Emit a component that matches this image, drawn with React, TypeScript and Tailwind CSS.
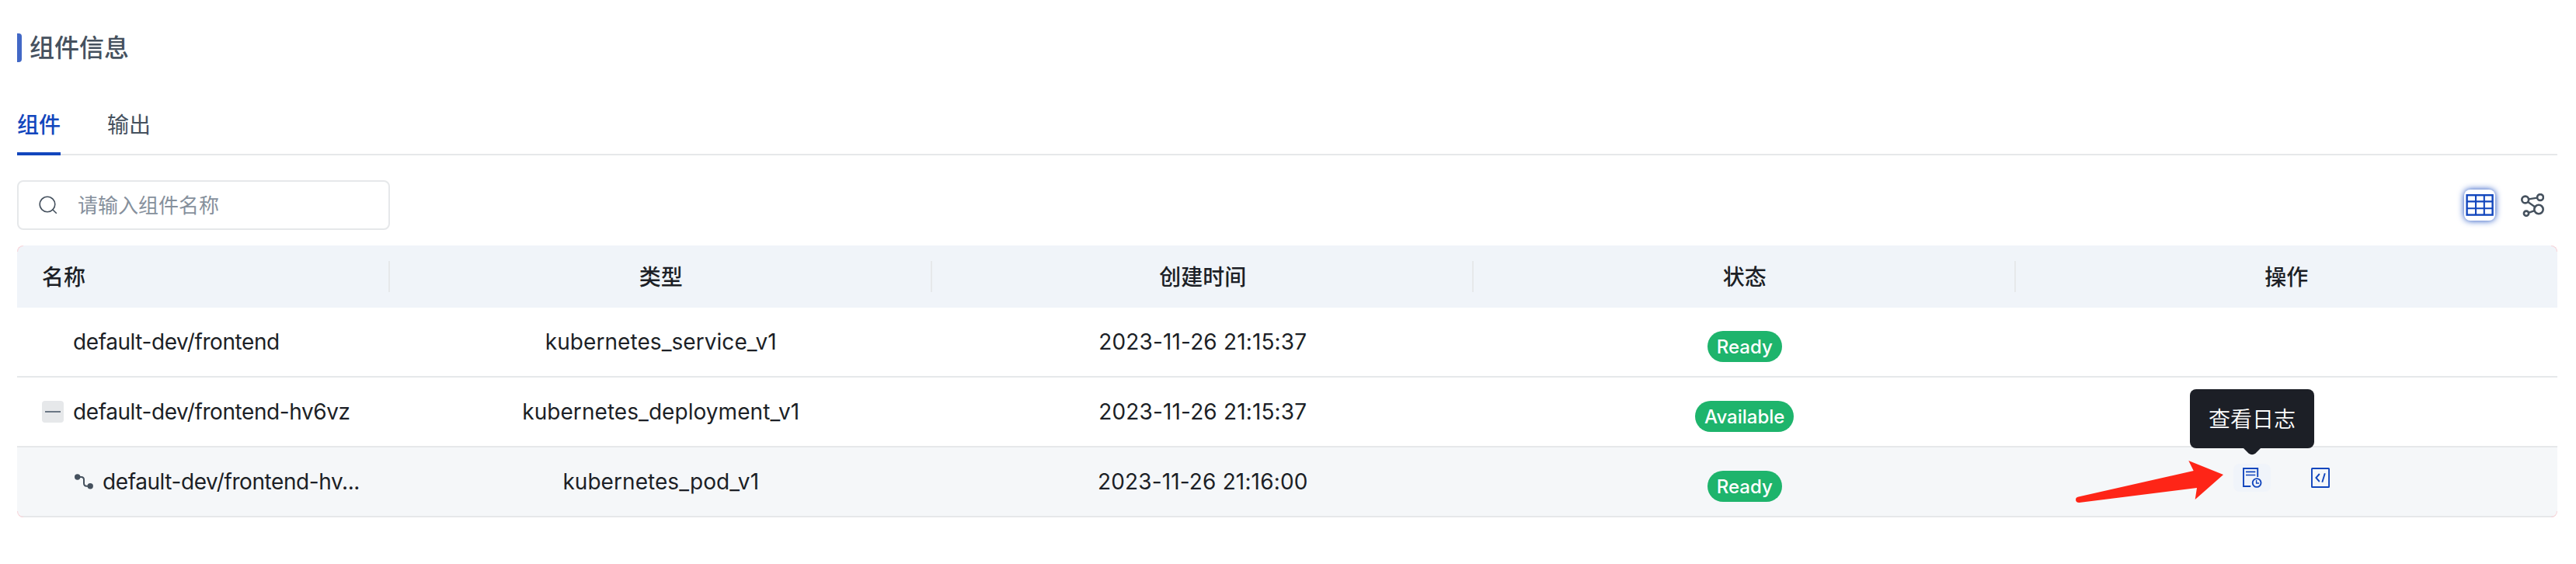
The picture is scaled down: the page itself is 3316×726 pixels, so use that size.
import React from "react";

const rowCols = "grid grid-cols-[480px_repeat(4,minmax(0,1fr))]";

type Row = {
  name: string;
  type: string;
  time: string;
  status: string;
  kind: "plain" | "parent" | "child";
};

const rows: Row[] = [
  { name: "default-dev/frontend", type: "kubernetes_service_v1", time: "2023-11-26 21:15:37", status: "Ready", kind: "plain" },
  { name: "default-dev/frontend-hv6vz", type: "kubernetes_deployment_v1", time: "2023-11-26 21:15:37", status: "Available", kind: "parent" },
  { name: "default-dev/frontend-hv...", type: "kubernetes_pod_v1", time: "2023-11-26 21:16:00", status: "Ready", kind: "child" },
];

const headers = ["名称", "类型", "创建时间", "状态", "操作"];

function SearchIcon() {
  return (
    <svg className="h-6 w-6" viewBox="0 0 24 24" fill="none" stroke="#45515e" strokeWidth="1.6">
      <circle cx="11" cy="11" r="9.8" />
      <path d="M17.5 17.5 L22.8 22.8" />
    </svg>
  );
}

function GridIcon() {
  return (
    <svg className="h-7 w-9" viewBox="0 0 36 28" fill="none" stroke="#1246bd">
      <rect x="1.6" y="1.2" width="33" height="25.4" strokeWidth="2.4" />
      <path d="M1 9.4 H35 M1 18.3 H35 M13 1 V27 M23.8 1 V27" strokeWidth="2.1" />
    </svg>
  );
}

function GraphIcon() {
  return (
    <svg className="h-[30px] w-[30px]" viewBox="0 0 30 30" fill="none" stroke="#45515e" strokeWidth="2.6">
      <circle cx="5.7" cy="8" r="4.4" />
      <circle cx="25" cy="5" r="3.9" />
      <circle cx="23" cy="20.5" r="5.7" />
      <circle cx="7" cy="25.7" r="3.1" />
      <path d="M10 7.3 L21 5.6 M9.2 11 L18.4 17.5 M10 24.8 L17.6 22.1" strokeWidth="2.3" />
    </svg>
  );
}

function ChildIcon() {
  return (
    <svg className="h-5 w-6" viewBox="0 0 24 20" fill="none">
      <circle cx="3.7" cy="4" r="3.7" fill="#45515e" />
      <circle cx="20.2" cy="15.8" r="3.7" fill="#45515e" />
      <path d="M4 4 H8.5 C11 4 12 5.2 12 7.5 V12 C12 14.7 13 15.8 15.5 15.8 H20" stroke="#45515e" strokeWidth="2" />
    </svg>
  );
}

function LogIcon() {
  return (
    <svg className="h-[26px] w-[25px]" viewBox="0 0 25 26" fill="none" stroke="#1246bd" strokeWidth="1.9">
      <path d="M10.2 24 H1 V1 H19.2 V12" />
      <path d="M4 5.3 H16.3 M4 9.5 H16.3" strokeWidth="1.7" />
      <circle cx="18.1" cy="19.5" r="5.4" />
      <path d="M17.6 16 V20 H21" strokeWidth="1.4" />
    </svg>
  );
}

function CodeIcon() {
  return (
    <svg className="h-[26px] w-6" viewBox="0 0 24 26" fill="none" stroke="#1246bd" strokeWidth="1.9">
      <rect x="0.95" y="0.95" width="22.1" height="24.1" rx="0.6" />
      <path d="M10.8 8 L6.4 13 L10.8 18 M17.8 7.2 L14.3 18.8" strokeWidth="1.9" />
    </svg>
  );
}

function Actions() {
  return (
    <div className="flex h-full items-start justify-center gap-10 pt-[21px]">
      <div className="relative flex h-9 w-12 items-center justify-center rounded-lg bg-[#f0f4fa]">
        <LogIcon />
        <div className="absolute bottom-14 left-1/2 flex h-19 w-40 -translate-x-1/2 items-center justify-center whitespace-nowrap rounded-lg bg-[#1c1f26] pt-px text-[28px] font-[350] leading-none text-white">
          查看日志
          <svg className="absolute left-[69px] top-[75px] h-[10px] w-[22px]" viewBox="0 0 22 10">
            <path d="M0 0 V1 L6.5 7.4 Q11 11 15.5 7.4 L22 1 V0 Z" fill="#1c1f26" />
          </svg>
        </div>
        <svg className="absolute right-[61px] top-[-4px] h-[54px] w-[190px]" viewBox="0 0 190 54">
          <path
            d="M3.5 46.5 L151.7 13 L145.3 0 L190 18 L153.7 50 L156 35 L4.5 54 Q0 54 0 50 Q0 47 3.5 46.5 Z"
            fill="#fe2517"
          />
        </svg>
      </div>
      <div className="flex h-9 w-12 items-center justify-center">
        <CodeIcon />
      </div>
    </div>
  );
}

function NameCell({ row }: { row: Row }) {
  if (row.kind === "child") {
    return (
      <div className="flex items-center gap-3 pl-[74px]">
        <ChildIcon />
        <span className="whitespace-nowrap tracking-[-0.42px]">{row.name}</span>
      </div>
    );
  }
  return (
    <div className="flex items-center gap-3 pl-8">
      <span className={row.kind === "parent" ? "flex h-7 w-7 items-center justify-center rounded bg-[#e6e8ea]" : "h-7 w-7"}>
        {row.kind === "parent" && <span className="h-0.5 w-5 bg-[#6b7785]" />}
      </span>
      <span className="whitespace-nowrap tracking-[-0.42px]">{row.name}</span>
    </div>
  );
}

export default function App() {
  return (
    <div className="h-[726px] w-[3316px] bg-white pl-[22px] pr-6 font-['Inter','Noto_Sans_CJK_SC',sans-serif] text-[#1c1f26]">
      <div className="flex h-[120px] items-start gap-[10px] pt-[43px]">
        <span className="h-[37px] w-1.5 rounded-r bg-[#4268c6]" />
        <h1 className="text-[32px] font-medium leading-[37px] text-[#45515e]">组件信息</h1>
      </div>

      <div className="flex h-20 gap-[60px] border-b-2 border-[#e6e8ea] text-[28px]">
        <div className="-mb-0.5 flex h-20 items-center border-b-4 border-[#1246bd] pt-1.5 font-medium text-[#1246bd]">组件</div>
        <div className="flex h-20 items-center pt-0.5 text-[#45515e]">输出</div>
      </div>

      <div className="mt-8 flex h-16 items-center justify-between">
        <div className="flex h-16 w-[480px] items-center gap-[26px] rounded-lg border-2 border-[#e6e8ea] pl-[26px]">
          <SearchIcon />
          <span className="pt-px text-[26px] text-[#86909c]">请输入组件名称</span>
        </div>
        <div className="flex items-center gap-[33px] pr-[17px]">
          <div className="flex h-10 w-10 items-center justify-center rounded-lg bg-white shadow-[0_0_8px_0_#1246bd]">
            <GridIcon />
          </div>
          <GraphIcon />
        </div>
      </div>

      <div className="relative mt-5">
        <div className="overflow-hidden rounded-lg">
          <div className={`${rowCols} h-20 items-center bg-[#f0f4f9] text-[28px] font-medium`}>
            {headers.map((h, i) => (
              <div
                key={h}
                className={`flex h-10 items-center pt-0.5 ${i === 0 ? "pl-8" : "justify-center"} ${i > 0 && i < 4 ? "pl-0.5" : ""} ${i < 4 ? "border-r-2 border-[#e6e8ea]" : ""}`}
              >
                {h}
              </div>
            ))}
          </div>
          {rows.map((row) => (
            <div
              key={row.name}
              className={`${rowCols} h-[90px] items-center border-b-2 border-[#e6e8ea] text-[28px] ${row.kind === "child" ? "bg-[#f5f7f9]" : ""}`}
            >
              <NameCell row={row} />
              <div className="text-center tracking-[0.06px]">{row.type}</div>
              <div className="text-center tracking-[0.15px]">{row.time}</div>
              <div className="flex justify-center pt-3">
                <span className="flex h-10 items-center rounded-[20px] bg-[#1eb46c] px-3 pt-0.5 text-[24px] font-medium text-white">
                  {row.status}
                </span>
              </div>
              <div className="h-full" />
            </div>
          ))}
        </div>
        <div className="absolute bottom-0 right-0 h-[90px] w-[698px]">
          <Actions />
        </div>
        <span className="absolute left-0 top-0 h-2 w-2 rounded-tl-lg border-l border-t border-[#f9d5da]" />
        <span className="absolute right-0 top-0 h-2 w-2 rounded-tr-lg border-r border-t border-[#f9d5da]" />
        <span className="absolute bottom-0 left-0 h-2 w-2 rounded-bl-lg border-b border-l border-[#f9d5da]" />
        <span className="absolute bottom-0 right-0 h-2 w-2 rounded-br-lg border-b border-r border-[#f9d5da]" />
      </div>
    </div>
  );
}
